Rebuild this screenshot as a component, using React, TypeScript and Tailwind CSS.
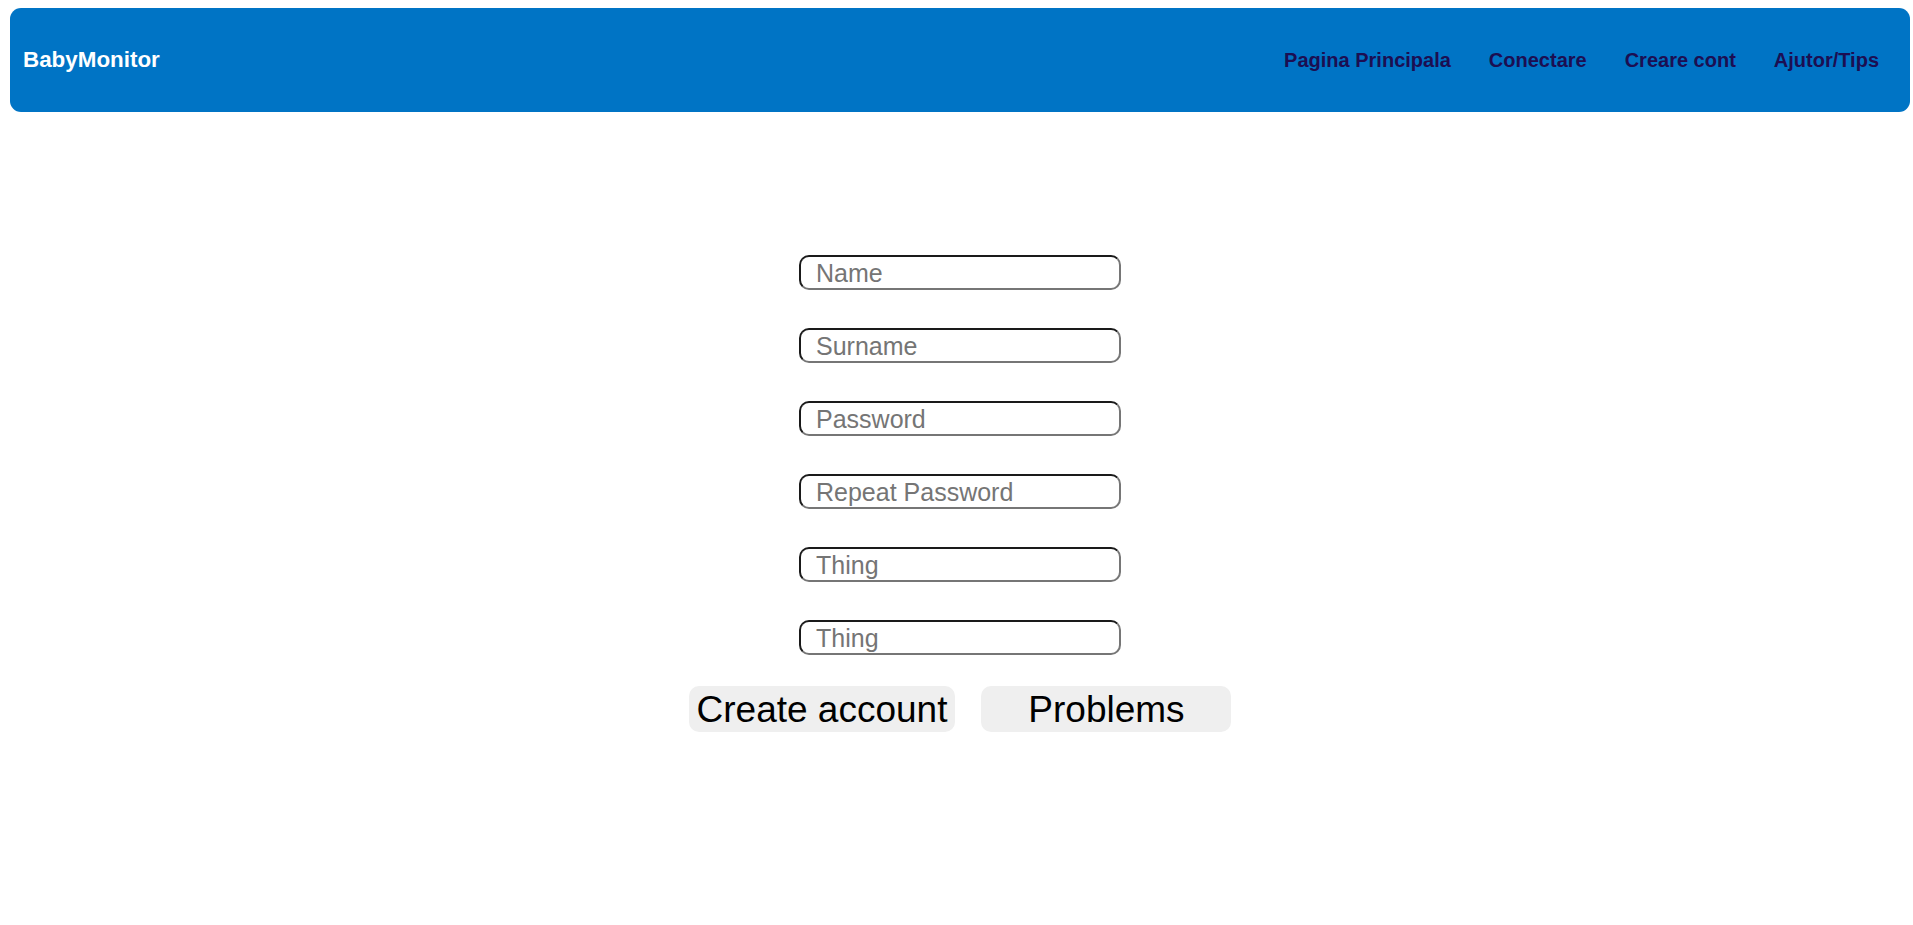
import { FC } from "react";

const links = ["Pagina Principala", "Conectare", "Creare cont", "Ajutor/Tips"];

const fields = ["Name", "Surname", "Password", "Repeat Password", "Thing", "Thing"];

const Field: FC<{ placeholder: string }> = ({ placeholder }) => (
  <input
    type={placeholder.includes("Password") ? "password" : "text"}
    placeholder={placeholder}
    className="h-[35px] w-[322px] rounded-[10px] border-2 border-t-[#1a1a1a] border-l-[#1a1a1a] border-r-[#767676] border-b-[#767676] bg-white pl-[15px] pt-[2px] text-[25px] leading-none text-black outline-none placeholder:text-[#757575]"
  />
);

export default function App() {
  return (
    <div className="min-h-screen bg-white font-['Liberation_Sans',Arial,sans-serif]">
      <header className="ml-[10px] mt-[8px] flex h-[104px] w-[1900px] items-center justify-between rounded-[11px] bg-[#0074c5] pl-[13px] pr-[31px]">
        <span className="text-[22.4px] font-bold text-white">BabyMonitor</span>
        <nav className="flex gap-[38px]">
          {links.map((l) => (
            <a key={l} href="#" className="text-[20px] font-bold text-[#1c0e52]">
              {l}
            </a>
          ))}
        </nav>
      </header>

      <main className="ml-[10px] flex w-[1900px] flex-col items-center pt-[143px]">
        <div className="flex flex-col items-center gap-[38px]">
          {fields.map((f, i) => (
            <Field key={i} placeholder={f} />
          ))}
        </div>
        <div className="mt-[31px] flex gap-[26px]">
          <button className="h-[46px] rounded-[10px] bg-[#efefef] px-[8px] text-[37px] leading-none text-black">
            Create account
          </button>
          <button className="h-[46px] w-[250px] rounded-[10px] bg-[#efefef] text-[37px] leading-none text-black">
            Problems
          </button>
        </div>
      </main>
    </div>
  );
}
